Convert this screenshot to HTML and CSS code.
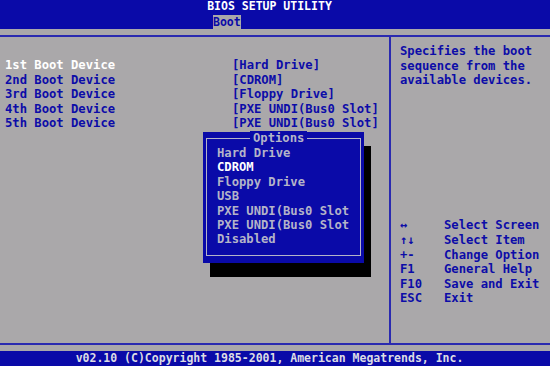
FILE: index.html
```html
<!DOCTYPE html>
<html lang="en">
  <head>
    <meta charset="UTF-8" />
    <title>BIOS Setup Utility - Boot</title>
    <link rel="stylesheet" href="styles.css">
  </head>
  <body>
    <header class="top-bar">
      <div class="title">BIOS SETUP UTILITY</div>
      <nav class="tabs">
        <span class="tab active">Boot</span>
      </nav>
    </header>

    <section class="frame">
      <article class="settings">
        <div class="setting selected">
          <span>1st Boot Device</span><span>[Hard Drive]</span>
        </div>
        <div class="setting">
          <span>2nd Boot Device</span><span>[CDROM]</span>
        </div>
        <div class="setting">
          <span>3rd Boot Device</span><span>[Floppy Drive]</span>
        </div>
        <div class="setting">
          <span>4th Boot Device</span><span>[PXE UNDI(Bus0 Slot]</span>
        </div>
        <div class="setting">
          <span>5th Boot Device</span><span>[PXE UNDI(Bus0 Slot]</span>
        </div>

        <div class="popup">
          <div class="popup-inner">
            <div class="popup-title">Options</div>
            <ul class="options">
              <li>Hard Drive</li>
              <li class="current">CDROM</li>
              <li>Floppy Drive</li>
              <li>USB</li>
              <li>PXE UNDI(Bus0 Slot</li>
              <li>PXE UNDI(Bus0 Slot</li>
              <li>Disabled</li>
            </ul>
          </div>
        </div>
      </article>

      <aside class="help">
        <p class="help-text">Specifies the boot sequence from the available devices.</p>
        <dl class="keys">
          <dt>&harr;</dt><dd>Select Screen</dd>
          <dt>&uarr;&darr;</dt><dd>Select Item</dd>
          <dt>+-</dt><dd>Change Option</dd>
          <dt>F1</dt><dd>General Help</dd>
          <dt>F10</dt><dd>Save and Exit</dd>
          <dt>ESC</dt><dd>Exit</dd>
        </dl>
      </aside>
    </section>

    <footer class="footer">
      v02.10 (C)Copyright 1985-2001, American Megatrends, Inc.
    </footer>
  </body>
</html>
```

FILE: styles.css
```css
html,
body {
  margin: 0;
  width: 550px;
  height: 366px;
  overflow: hidden;
}

body {
  background: #aaa8aa;
  color: #0c0ca8;
  font-family: "DejaVu Sans Mono", "Liberation Mono", monospace;
  font-weight: bold;
  font-size: 12.2px;
  display: flex;
  flex-direction: column;
}

.top-bar {
  background: #0a0aa8;
  height: 29px;
  font-size: 11.5px;
}

.title {
  color: #ffffff;
  height: 15px;
  line-height: 13px;
  text-align: center;
  padding-right: 11px;
}

.tabs {
  display: flex;
  padding-left: 213px;
}

.tab {
  height: 14px;
  line-height: 14px;
}

.tab.active {
  background: #aaa8aa;
  color: #0a0aa8;
}

.frame {
  position: relative;
  margin-top: 6px;
  height: 306px;
  border-top: 2px solid #2a2ab0;
  border-bottom: 2px solid #2a2ab0;
  display: flex;
}

.settings {
  width: 384px;
  padding: 21px 0 0 5px;
}

.setting {
  display: grid;
  grid-template-columns: 227px 1fr;
  line-height: 14.6px;
  white-space: nowrap;
}

.setting.selected span:first-child {
  color: #ffffff;
}

.popup {
  position: absolute;
  left: 203px;
  top: 95px;
  width: 161px;
  height: 131px;
  box-sizing: border-box;
  padding: 6px 3px 7px;
  background: #0a0aa8;
  box-shadow: 7px 14px 0 #000000;
}

.popup-inner {
  height: 100%;
  box-sizing: border-box;
  border: 1px solid #b4b4c8;
}

.popup-title {
  display: table;
  margin: -8px 0 0 43px;
  padding: 0 3px;
  line-height: 14px;
  background: #0a0aa8;
  color: #b4b4c8;
}

.options {
  list-style: none;
  margin: 0;
  padding: 1px 0 0 10px;
  color: #b4b4c8;
  white-space: nowrap;
}

.options li {
  line-height: 14.4px;
}

.options .current {
  color: #ffffff;
}

.help {
  flex: 1;
  border-left: 2px solid #2a2ab0;
  padding: 7px 0 37px 9px;
  display: flex;
  flex-direction: column;
}

.help-text {
  margin: 0;
  line-height: 14.6px;
}

.keys {
  margin: auto 0 0;
  display: grid;
  grid-template-columns: 44px 1fr;
  line-height: 14.6px;
}

.keys dt,
.keys dd {
  margin: 0;
}

.footer {
  margin-top: 6px;
  height: 15px;
  line-height: 15px;
  background: #0a0aa8;
  color: #dcdce4;
  font-size: 11.5px;
  text-align: center;
  padding-right: 11px;
}
```
